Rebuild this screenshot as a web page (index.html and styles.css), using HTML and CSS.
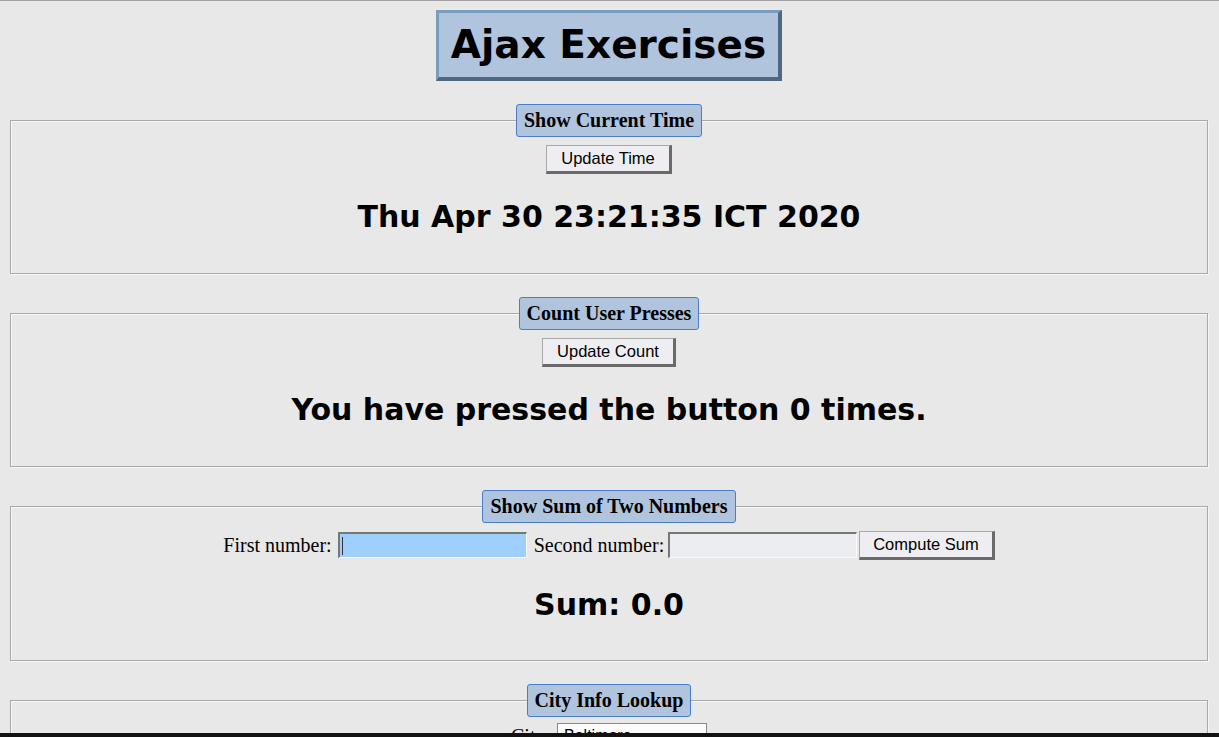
FILE: index.html
```html
<!DOCTYPE html>
<html>
<head>
<meta charset="utf-8">
<title>Ajax Exercises</title>
<link rel="stylesheet" href="styles.css">
</head>
<body>
<div class="page">
  <div class="title-row"><h1 class="title">Ajax Exercises</h1></div>

  <fieldset class="panel">
    <legend class="panel-legend">Show Current Time</legend>
    <div class="controls"><button class="btn">Update Time</button></div>
    <h2 class="result">Thu Apr 30 23:21:35 ICT 2020</h2>
  </fieldset>

  <fieldset class="panel">
    <legend class="panel-legend">Count User Presses</legend>
    <div class="controls"><button class="btn">Update Count</button></div>
    <h2 class="result">You have pressed the button 0 times.</h2>
  </fieldset>

  <fieldset class="panel">
    <legend class="panel-legend">Show Sum of Two Numbers</legend>
    <div class="controls">
      <label class="lbl">First number:</label>
      <span class="field field-focus"><span class="caret"></span></span>
      <label class="lbl lbl-second">Second number:</label>
      <span class="field"></span>
      <button class="btn btn-sum">Compute Sum</button>
    </div>
    <h2 class="result result-sum">Sum: 0.0</h2>
  </fieldset>

  <fieldset class="panel panel-last">
    <legend class="panel-legend">City Info Lookup</legend>
    <div class="controls">
      <label class="lbl">City:</label>
      <span class="select">Baltimore<span class="chev">&#8964;</span></span>
    </div>
  </fieldset>
</div>
<div class="bottom-bar"></div>
</body>
</html>
```
FILE: styles.css
```css
html, body {
  margin: 0;
  padding: 0;
  height: 100%;
  overflow: hidden;
}
body {
  background: #e8e8e8;
  border-top: 1px solid #a3a3a3;
  box-sizing: border-box;
  font-family: "Liberation Serif", "Times New Roman", serif;
  font-size: 20px;
  color: #000;
}
.page {
  padding: 9px 11px 0 10px;
}
.title-row {
  display: flex;
  justify-content: center;
  margin-bottom: 23px;
}
.title {
  margin: 0;
  background: #b0c4de;
  border-style: solid;
  border-width: 3px 4px 4px 3px;
  border-color: #7b9cbe #4f6880 #4f6880 #7b9cbe;
  font-family: "DejaVu Sans", Verdana, sans-serif;
  font-weight: bold;
  font-size: 39px;
  line-height: 47px;
  padding: 8px 12px 9px 12px;
}
.panel {
  margin: 0 0 23px 0;
  padding: 7px 15px 14px;
  border: 1px solid #a9a9a9;
  box-shadow: inset 1px 1px 0 #f7f7f7, 1px 1px 0 #f7f7f7;
  min-width: 0;
}
.panel-last {
  padding-top: 4px;
}
.panel-legend {
  margin: 0 auto;
  background: #b0c4de;
  border: 1px solid #4a7cc8;
  border-radius: 3px;
  font-weight: bold;
  font-size: 20px;
  line-height: 23px;
  padding: 4px 7px 4px 7px;
}
.controls {
  display: flex;
  justify-content: center;
  align-items: center;
  height: 30px;
}
.btn {
  box-sizing: border-box;
  height: 29px;
  margin: 0;
  padding: 0 14px;
  font-family: "Liberation Sans", Arial, sans-serif;
  font-size: 16.5px;
  color: #000;
  background: #eeeef2;
  border-style: solid;
  border-width: 1px 3px 3px 1px;
  border-color: #a8a8a8 #6a6a6a #6a6a6a #a8a8a8;
}
.result {
  margin: 25px 0 25px;
  text-align: center;
  font-family: "DejaVu Sans", Verdana, sans-serif;
  font-weight: bold;
  font-size: 30px;
  line-height: 35px;
}
.result-sum {
  margin-top: 27px;
  margin-bottom: 24px;
}
.lbl {
  margin-right: 6px;
}
.lbl-second {
  margin-left: 7px;
  margin-right: 4px;
}
.field {
  box-sizing: border-box;
  display: inline-flex;
  align-items: center;
  width: 189px;
  height: 26px;
  background: #ecedf1;
  border-style: solid;
  border-width: 2px 1px 1px 2px;
  border-color: #777 #fafafa #fafafa #777;
}
.field-focus {
  background: #9fd0fd;
}
.caret {
  display: block;
  width: 1px;
  height: 18px;
  margin-left: 2px;
  background: #333;
}
.btn-sum {
  margin-left: 2px;
  padding: 0 13px;
}
.select {
  box-sizing: border-box;
  display: inline-flex;
  align-items: center;
  justify-content: space-between;
  width: 150px;
  height: 26px;
  padding: 0 6px;
  background: #fbfbfb;
  border: 1px solid #8a8a8a;
  font-family: "Liberation Sans", Arial, sans-serif;
  font-size: 16px;
}
.chev {
  font-size: 14px;
}
.bottom-bar {
  position: fixed;
  left: 0;
  right: 0;
  bottom: 0;
  height: 4px;
  background: #121212;
}
```
